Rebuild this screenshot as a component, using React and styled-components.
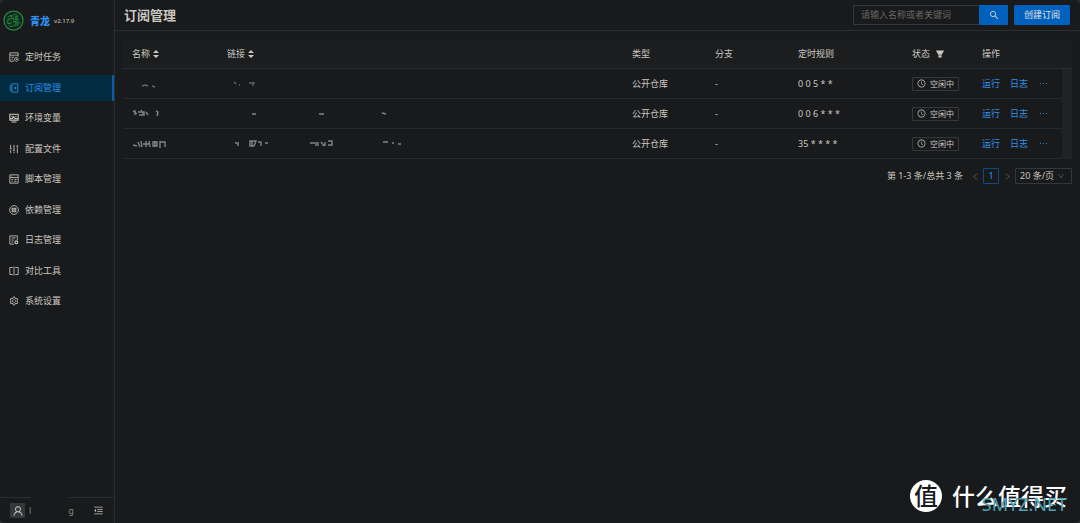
import styled, { createGlobalStyle } from 'styled-components'
import {
  AiOutlineSearch,
  AiOutlineClockCircle,
  AiOutlineSetting,
  AiOutlineUser,
  AiOutlineMenuFold,
  AiOutlineLeft,
  AiOutlineRight,
  AiOutlineDown,
  AiOutlineEllipsis,
  AiFillFilter,
} from 'react-icons/ai'

const GlobalStyle = createGlobalStyle`
  * {
    box-sizing: border-box;
  }

  body {
    margin: 0;
    background: #2b2e30;
    color: #ccc8c1;
    font-family: 'Noto Sans', 'Noto Sans CJK SC', sans-serif;
    font-size: 9px;
    line-height: 14px;
  }

  button, input, select {
    font: inherit;
    color: inherit;
  }
`

const Page = styled.div`
  display: flex;
  min-height: 100vh;
  border-radius: 5px;
  background: #181a1b;
  overflow: hidden;
`

const Sidebar = styled.aside`
  flex: 0 0 115px;
  display: flex;
  flex-direction: column;
  border-right: 1px solid #2b2e30;
`

const Brand = styled.a`
  display: flex;
  align-items: center;
  height: 44px;
  padding: 0 0 3px 3px;
  color: #3193f5;
  text-decoration: none;
`

const BrandName = styled.strong`
  margin-left: 6px;
  font-size: 10px;
  font-weight: 900;
`

const Version = styled.span`
  margin-left: 4px;
  color: #c0bab0;
  font-size: 6px;
  font-weight: 500;
`

const Menu = styled.nav`
  display: flex;
  flex-direction: column;
  justify-content: space-between;
  height: 270px;
`

const MenuLink = styled.a`
  display: flex;
  align-items: center;
  gap: 6px;
  height: 26px;
  padding-left: 9px;
  color: ${props => (props.$active ? '#2f8fe8' : '#ccc8c1')};
  background: ${props => (props.$active ? '#002b40' : 'transparent')};
  border-right: 2px solid ${props => (props.$active ? '#0a5cab' : 'transparent')};
  text-decoration: none;
`

const MenuIcon = styled.svg`
  width: 10px;
  height: 10px;
  fill: none;
  stroke: currentColor;
  stroke-width: 1;
`

const UserBar = styled.div`
  display: flex;
  align-items: center;
  height: 26px;
  margin-top: auto;
  padding: 0 10px;
  border-top: 1px solid #2b2e30;
`

const Avatar = styled.span`
  display: flex;
  align-items: center;
  justify-content: center;
  width: 15px;
  height: 15px;
  background: #34383a;
  font-size: 12px;
`

const UserName = styled.span`
  display: flex;
  align-items: center;
  margin-left: 4px;
  color: #8d8981;
`

const NameMask = styled.span`
  width: 37px;
  height: 28px;
  margin-top: -2px;
  background: #181a1b;
`

const FoldButton = styled.button`
  display: flex;
  margin-left: auto;
  padding: 0;
  border: 0;
  background: none;
  font-size: 11px;
`

const Main = styled.main`
  flex: 1;
  min-width: 0;
`

const Header = styled.header`
  display: flex;
  align-items: center;
  height: 31px;
  padding: 0 10px 0 9px;
  border-bottom: 1px solid #2b2e30;
`

const Title = styled.h1`
  margin: 0 auto 0 0;
  font-size: 13px;
  line-height: 20px;
`

const Search = styled.form`
  display: flex;
  width: 155px;
  height: 20px;
  margin-right: 6px;
`

const SearchInput = styled.input`
  flex: 1;
  min-width: 0;
  padding: 0 7px;
  border: 1px solid #34383a;
  border-right: 0;
  border-radius: 1px 0 0 1px;
  background: #181a1b;
  outline: 0;

  &::placeholder {
    color: #6b665f;
    opacity: 1;
  }
`

const PrimaryButton = styled.button`
  display: flex;
  align-items: center;
  justify-content: center;
  width: ${props => props.$width};
  height: 20px;
  padding: 0;
  border: 0;
  border-radius: 1px;
  background: #0060bd;
  color: #e8e6e3;
`

const Content = styled.section`
  padding: 8px 8px 0;
`

const Table = styled.table`
  width: 100%;
  table-layout: fixed;
  border-spacing: 0;
`

const Th = styled.th`
  width: ${props => props.$width};
  height: 30px;
  padding: 0 0 0 9px;
  border-bottom: 1px solid #2b2e30;
  background: #1b1d1e;
  font-weight: 400;
  text-align: left;
`

const GutterHead = styled.td`
  width: 10px;
  padding: 0;
  border-bottom: 1px solid #2b2e30;
  background: #1b1d1e;
`

const HeadLabel = styled.span`
  display: flex;
  align-items: center;
  gap: ${props => props.$gap || '3px'};
`

const Td = styled.td`
  height: 30px;
  padding: 0 0 0 9px;
  border-bottom: 1px solid #272a2b;
  white-space: nowrap;
`

const Gutter = styled.td`
  padding: 0;
  background: #202324;
`

const Smudge = styled.svg`
  display: block;
  width: ${props => props.$width};
  height: 14px;
  fill: none;
  stroke: #a9b4b7;
  stroke-width: 1.4;
`

const Tag = styled.span`
  display: inline-flex;
  align-items: center;
  gap: 4px;
  height: 14px;
  padding: 0 4px;
  border: 1px solid #34383a;
  border-radius: 1px;
  font-size: 8px;
  vertical-align: middle;
`

const Actions = styled.div`
  display: flex;
  align-items: center;
  gap: 10px;
  color: #3391e6;

  a {
    color: inherit;
    text-decoration: none;
  }
`

const MoreButton = styled.button`
  display: flex;
  padding: 0;
  border: 0;
  background: none;
  color: #3391e6;
  font-size: 11px;
`

const Pagination = styled.div`
  display: flex;
  align-items: center;
  justify-content: flex-end;
  margin-top: 9px;
  height: 16px;
`

const PageArrow = styled.button`
  display: flex;
  align-items: center;
  justify-content: center;
  width: 16px;
  padding: 0;
  border: 0;
  background: none;
  color: #5f5b55;
  font-size: 9px;
`

const PageNumber = styled.button`
  width: 16px;
  height: 16px;
  padding: 0;
  border: 1px solid #0b4a87;
  border-radius: 1px;
  background: none;
  color: #3193f5;
  line-height: 14px;
`

const Total = styled.span`
  margin-right: 4px;
`

const PageSize = styled.label`
  display: flex;
  align-items: center;
  width: 57px;
  height: 16px;
  padding-right: 6px;
  border: 1px solid #34383a;
  border-radius: 1px;
  color: #5f5b55;
  font-size: 8px;

  select {
    flex: 1;
    min-width: 0;
    height: 14px;
    padding: 0 0 0 4px;
    border: 0;
    background: none;
    color: #ccc8c1;
    font-size: 9px;
    line-height: 14px;
    appearance: none;
    outline: 0;
  }
`

const Watermark = styled.div`
  position: absolute;
  right: 13px;
  bottom: 10px;
  display: flex;
  align-items: center;
  gap: 10px;
  color: #fff;
  font-size: 23px;
  font-weight: 500;
  line-height: 34px;
`

const WatermarkBadge = styled.span`
  width: 32px;
  height: 32px;
  border-radius: 50%;
  background: #fff;
  color: #181a1b;
  font-size: 24px;
  font-style: oblique 8deg;
  line-height: 31px;
  text-align: center;
`

const WatermarkSite = styled.span`
  position: absolute;
  right: 0;
  bottom: -3px;
  color: #4fa3b5;
  font-size: 18px;
  font-weight: 400;
  line-height: 24px;
`

const menuItems = [
  {
    label: '定时任务',
    icon: <path d="M6 11H1V1h10v4.500M1 3.800h10M3 6.200h3M3 8.500h1.500M8.800 6.500a2.300 2.300 0 1 0 .01 0M8.500 7.500v1.500h1.500" />,
  },
  {
    label: '订阅管理',
    active: true,
    icon: <path d="M3.500 1h7v10h-7zM3.500 3h-2v6h2M7.500 4.500v3M6 6h3" />,
  },
  {
    label: '环境变量',
    icon: <path strokeWidth="1.300" d="M1 1.500h10v7H1zM3 10.800h6M1 6.500h3l1.500-2 1.500 2h4M3 3.800h1.500M7.500 3.800h1.500" />,
  },
  {
    label: '配置文件',
    icon: <path d="M2 1v4M2 7v4M6 1v6M6 9v2M10 1v2M10 5v6M.800 5.500h2.400M4.800 7.500h2.400M8.800 3.500h2.400" />,
  },
  {
    label: '脚本管理',
    icon: <path d="M1 1h10v10H1zM1 4.300h10M3 2.600h1M3 6.500h2M6.500 6.500h2.500M3 8.700h1.500M6 8.700h3" />,
  },
  {
    label: '依赖管理',
    icon: <path d="M6 .800a5.200 5.200 0 1 0 .01 0M3 4h6M3 6h6M3 8h6M4.500 3.500v5M7.500 3.500v5" />,
  },
  {
    label: '日志管理',
    icon: (
      <>
        <path d="M6 11H1V1h9v5M3 3.500h5M3 6h3M3 8.500h2" />
        <circle cx="8.800" cy="8.800" r="1.700" strokeWidth="1.400" />
      </>
    ),
  },
  {
    label: '对比工具',
    icon: <path d="M4.500 1.800H1v8.400h3.500M7.500 1.800H11v8.400H7.500M6 .500v11" />,
  },
  { label: '系统设置' },
]

const rows = [
  {
    type: '公开仓库',
    branch: '-',
    schedule: '0 0 5 * *',
    name: 'M10 9l3-1 3 1M20 9l3 1',
    link: 'M7 5l2 2M12 8h1M22 6h6M25 8h2',
    width: '222px',
    opacity: 0.5,
  },
  {
    type: '公开仓库',
    branch: '-',
    schedule: '0 0 6 * * *',
    name: 'M1 4l4 3M3 3v5M6 5h4M7 8h4M9 3l3 5M12 4v5M14 5l2 3M24 4l2 1-1 4',
    link: 'M25 7h4M92 7h5M155 6l4 1',
    width: '208px',
    opacity: 0.7,
  },
  {
    type: '公开仓库',
    branch: '-',
    schedule: '35 * * * *',
    name: 'M1 8l4 1M6 5l2 5M9 4l1 6M11 7h6M14 4v6M17 4l1 6M21 5h4v4h-4zM23 4v6M28 4v7M28 5h5v5',
    link: 'M8 6h4M10 8h2M23 4h6l-2 5h-4zM25 4v5M31 5h3v4M38 6h3M83 6h5M89 5v4M91 5v4M94 5l3 4M98 5v4M101 4h4v4h-4M156 5h5M165 6h2M171 7h3',
    width: '180px',
    opacity: 0.7,
  },
]

function DragonLogo() {
  return (
    <svg width="21" height="21" viewBox="0 0 42 42" fill="none" stroke="#238a42">
      <circle cx="21" cy="21" r="19" strokeWidth="2.5" />
      <circle cx="21" cy="21" r="15" strokeWidth="0" fill="#12301b" />
      <path
        strokeWidth="2"
        d="M9 15c5-6 9-1 12-5 3-3 7 0 9 3l-6 1 7 5-7-1c5 4 8 8 4 14M20 18c-7-3-11 1-11 5 0 5 7 5 9 1M20 23c6 0 8 5 4 9M12 31c4 3 9 3 11-2M15 17l-5 3M29 26l-6-4M14 10l4 4M8 26l5 2M32 24l3 2M20 14l2 6"
      />
    </svg>
  )
}

function SortIcon() {
  return (
    <svg width="6" height="8" viewBox="0 0 6 8" fill="currentColor">
      <path d="M3 0l3 3H0zM3 8L0 5h6z" />
    </svg>
  )
}

function Masked({ path, width, opacity }) {
  return (
    <Smudge $width={width} aria-hidden="true">
      <path d={path} opacity={opacity} />
    </Smudge>
  )
}

function App() {
  return (
    <>
      <GlobalStyle />
      <Page>
        <Sidebar>
          <Brand href="#">
            <DragonLogo />
            <BrandName>青龙</BrandName>
            <Version>v2.17.9</Version>
          </Brand>
          <Menu>
            {menuItems.map(item => (
              <MenuLink key={item.label} href="#" $active={item.active}>
                {item.icon ? <MenuIcon viewBox="0 0 12 12">{item.icon}</MenuIcon> : <AiOutlineSetting size={10} />}
                {item.label}
              </MenuLink>
            ))}
          </Menu>
          <UserBar>
            <Avatar><AiOutlineUser /></Avatar>
            <UserName>l<NameMask />g</UserName>
            <FoldButton aria-label="收起菜单"><AiOutlineMenuFold /></FoldButton>
          </UserBar>
        </Sidebar>

        <Main>
          <Header>
            <Title>订阅管理</Title>
            <Search>
              <SearchInput aria-label="搜索" placeholder="请输入名称或者关键词" />
              <PrimaryButton type="button" $width="29px" aria-label="搜索"><AiOutlineSearch size={10} /></PrimaryButton>
            </Search>
            <PrimaryButton $width="56px">创建订阅</PrimaryButton>
          </Header>

          <Content>
            <Table>
              <thead>
                <tr>
                  <Th $width="95px"><HeadLabel>名称<SortIcon /></HeadLabel></Th>
                  <Th><HeadLabel>链接<SortIcon /></HeadLabel></Th>
                  <Th $width="83px">类型</Th>
                  <Th $width="83px">分支</Th>
                  <Th $width="114px">定时规则</Th>
                  <Th $width="70px"><HeadLabel $gap="5px">状态<AiFillFilter size={10} /></HeadLabel></Th>
                  <Th $width="89px">操作</Th>
                  <GutterHead />
                </tr>
              </thead>
              <tbody>
                {rows.map((row, i) => (
                  <tr key={row.schedule}>
                    <Td><Masked path={row.name} width="60px" opacity={row.opacity} /></Td>
                    <Td><Masked path={row.link} width={row.width} opacity={row.opacity} /></Td>
                    <Td>{row.type}</Td>
                    <Td>{row.branch}</Td>
                    <Td>{row.schedule}</Td>
                    <Td><Tag><AiOutlineClockCircle size={9} />空闲中</Tag></Td>
                    <Td>
                      <Actions>
                        <a href="#">运行</a>
                        <a href="#">日志</a>
                        <MoreButton aria-label="更多"><AiOutlineEllipsis /></MoreButton>
                      </Actions>
                    </Td>
                    {i === 0 && <Gutter rowSpan={rows.length} />}
                  </tr>
                ))}
              </tbody>
            </Table>

            <Pagination>
              <Total>第 1-3 条/总共 3 条</Total>
              <PageArrow aria-label="上一页"><AiOutlineLeft /></PageArrow>
              <PageNumber>1</PageNumber>
              <PageArrow aria-label="下一页"><AiOutlineRight /></PageArrow>
              <PageSize>
                <select aria-label="每页条数">
                  <option>20 条/页</option>
                </select>
                <AiOutlineDown />
              </PageSize>
            </Pagination>
          </Content>
        </Main>

        <Watermark>
          <WatermarkBadge>值</WatermarkBadge>
          什么值得买
          <WatermarkSite>SMYZ.NET</WatermarkSite>
        </Watermark>
      </Page>
    </>
  )
}

export default App
